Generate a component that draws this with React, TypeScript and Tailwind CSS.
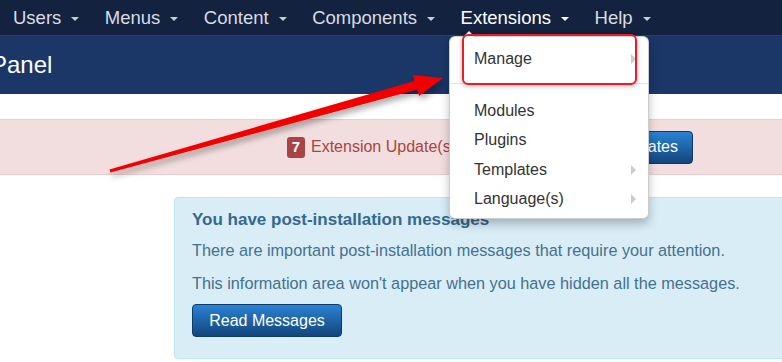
const navItems = ["Users", "Menus", "Content", "Components", "Extensions", "Help"];

const menuItems = [
  { label: "Modules", sub: false },
  { label: "Plugins", sub: false },
  { label: "Templates", sub: true },
  { label: "Language(s)", sub: true },
];

function Caret({ active }: { active?: boolean }) {
  return (
    <span
      className={[
        "ml-[10px] inline-block h-0 w-0 translate-y-[1px] border-x-[4px] border-t-[4px] border-x-transparent",
        active ? "border-t-white" : "border-t-[#c8ccd4]",
      ].join(" ")}
    />
  );
}

function SubArrow() {
  return (
    <span className="h-0 w-0 border-y-[5px] border-l-[5px] border-y-transparent border-l-[#cccccc]" />
  );
}

export default function App() {
  return (
    <div className="relative h-[362px] w-[782px] overflow-hidden bg-white font-['Liberation_Sans',Arial,sans-serif]">
      {/* top nav */}
      <nav className="flex h-[36px] items-center gap-[25.5px] border-b border-[#2a4068] bg-[#13223f] pl-[13px] text-[18.5px]">
        {navItems.map((n) => {
          const active = n === "Extensions";
          return (
            <div
              key={n}
              className={["flex items-center", active ? "text-white" : "text-[#d9dce2]"].join(" ")}
            >
              <span>{n}</span>
              <Caret active={active} />
            </div>
          );
        })}
      </nav>

      {/* header */}
      <header className="flex h-[58px] items-center bg-[#1a3768]">
        <h1 className="ml-[-9px] text-[24px] text-white">Panel</h1>
      </header>

      <div className="h-[25px]" />

      {/* update alert */}
      <div className="flex h-[56px] items-center border-y border-[#ebcdcd] bg-[#f2dede] pl-[287px] text-[16px] text-[#a94442]">
        <span className="flex h-[21px] w-[18px] items-center justify-center rounded-[3px] bg-[#a84444] text-[15px] font-bold text-white">
          7
        </span>
        <span className="ml-[6px]">Extension Update(s) are available:</span>
        <button className="ml-[9px] h-[33px] rounded-[4px] border border-[#0e3b68] bg-gradient-to-b from-[#2a83d4] to-[#13467c] px-[14px] text-[16px] text-white">
          View Updates
        </button>
      </div>

      <div className="h-[22px]" />

      {/* post-install messages */}
      <div className="ml-[174px] mr-[-8px] h-[162px] rounded-[4px] border border-[#bce8f1] bg-[#d9edf7] pl-[17px] pt-[12px]">
        <h2 className="text-[17px] leading-[20px] font-bold text-[#33698f]">
          You have post-installation messages
        </h2>
        <p className="mt-[10px] text-[16.25px] leading-[20px] text-[#44718f]">
          There are important post-installation messages that require your attention.
        </p>
        <p className="mt-[13px] text-[16.25px] leading-[20px] text-[#44718f]">
          This information area won't appear when you have hidden all the messages.
        </p>
        <button className="mt-[11px] h-[33px] w-[150px] rounded-[4px] border border-[#0e3b68] bg-gradient-to-b from-[#2a83d4] to-[#13467c] text-[16px] text-white">
          Read Messages
        </button>
      </div>

      {/* dropdown menu */}
      <div className="absolute left-[449px] top-[36px] w-[200px] rounded-[6px] border border-black/20 bg-white pb-[4px] pt-[7px] text-[16px] text-[#333333] shadow-[0_5px_10px_rgba(0,0,0,0.25)]">
        <span className="absolute -top-[7px] left-[12px] h-0 w-0 border-x-[7px] border-b-[7px] border-x-transparent border-b-black/20" />
        <span className="absolute -top-[6px] left-[13px] h-0 w-0 border-x-[6px] border-b-[6px] border-x-transparent border-b-white" />
        <div className="flex h-[29px] items-center justify-between pl-[24px] pr-[12px]">
          <span>Manage</span>
          <SubArrow />
        </div>
        <div className="mb-[12px] mt-[10px] h-px bg-[#e5e5e5]" />
        {menuItems.map((m) => (
          <div key={m.label} className="flex h-[29.5px] items-center justify-between pl-[24px] pr-[12px]">
            <span>{m.label}</span>
            {m.sub && <SubArrow />}
          </div>
        ))}
      </div>

      {/* annotation: red highlight box */}
      <div className="pointer-events-none absolute left-[462px] top-[34px] h-[51px] w-[175px] rounded-[6px] border-2 border-[#ec1c24] shadow-[0_1px_5px_rgba(0,0,0,0.3)]" />

      {/* annotation: red arrow */}
      <svg
        className="pointer-events-none absolute left-0 top-0"
        width="782"
        height="362"
        viewBox="0 0 782 362"
      >
        <defs>
          <filter id="sh" x="-10%" y="-10%" width="130%" height="140%">
            <feDropShadow dx="2" dy="4" stdDeviation="3" floodColor="#000" floodOpacity="0.35" />
          </filter>
        </defs>
        <polygon
          points="109.5,169.5 414.6,81 413,75 443,78 419,96 417.4,89.6 110.5,172.5"
          fill="#f20000"
          filter="url(#sh)"
        />
      </svg>
    </div>
  );
}
